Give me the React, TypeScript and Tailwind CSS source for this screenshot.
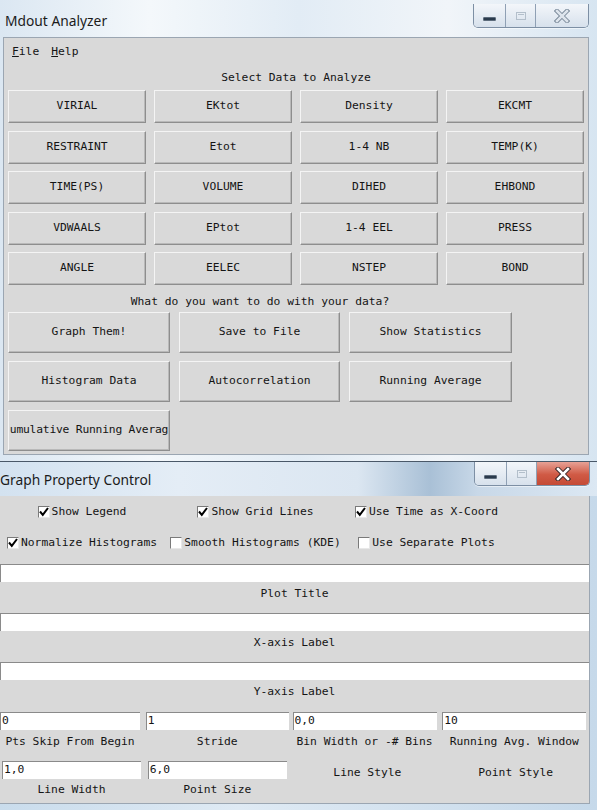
import React from "react";

const mono = "font-['DejaVu_Sans_Mono','Liberation_Mono',monospace] text-[11.3px] text-[#141414]";

function TkButton({ label, className = "", tight = false }: { label: string; className?: string; tight?: boolean }) {
  return (
    <div
      className={`flex items-center justify-center overflow-hidden whitespace-nowrap bg-[#d9d9d9] border border-t-[#f4f4f4] border-l-[#f4f4f4] border-r-[#8e8e8e] border-b-[#8e8e8e] shadow-[inset_-1px_-1px_0_#b9b9b9] ${className}`}
    >
      <span className={`${mono} ${tight ? "tracking-[-0.2px]" : ""}`}>{label}</span>
    </div>
  );
}

function Check({ checked }: { checked: boolean }) {
  return (
    <div className="w-[12px] h-[12px] bg-white border border-t-[#7a7a7a] border-l-[#7a7a7a] border-r-[#e8e8e8] border-b-[#e8e8e8] flex items-center justify-center">
      {checked && (
        <svg width="10" height="10" viewBox="0 0 10 10">
          <path d="M1 4.5 L3.8 7.8 L9 1" fill="none" stroke="#000" strokeWidth="2" />
        </svg>
      )}
    </div>
  );
}

function CheckItem({ checked, label }: { checked: boolean; label: string }) {
  return (
    <div className="flex items-center gap-[2px] justify-self-center">
      <Check checked={checked} />
      <span className={mono}>{label}</span>
    </div>
  );
}

function Entry({ value = "", className = "" }: { value?: string; className?: string }) {
  return (
    <div
      className={`h-[18px] bg-white border-t border-l border-t-[#8a8a8a] border-l-[#8a8a8a] flex items-center pl-[1px] ${className}`}
    >
      <span className={mono}>{value}</span>
    </div>
  );
}

function Controls({ active }: { active: boolean }) {
  return (
    <div className="flex h-[24px] border border-t-0 border-[#7d8fa4] rounded-b-[5px] overflow-hidden shadow-[0_1px_0_#ffffff80]">
      <div className="w-[32px] h-full bg-[linear-gradient(#f3f6fa,#d7e1ec)] border-r border-[#8fa0b4] flex items-end justify-center pb-[6px]">
        <div className="w-[13px] h-[4px] bg-[#2a3a4c] rounded-[1px] border border-[#5d6c7c]" />
      </div>
      <div className="w-[30px] h-full bg-[linear-gradient(#f3f6fa,#d7e1ec)] border-r border-[#8fa0b4] flex items-center justify-center">
        <div className="w-[10px] h-[8px] border border-[#b3bfcb] flex items-start justify-center">
          <div className="w-[6px] h-[1px] bg-[#b3bfcb] mt-[1px]" />
        </div>
      </div>
      <div
        className={`w-[52px] h-full flex items-center justify-center ${
          active ? "bg-[linear-gradient(#e7a195,#d05a45_55%,#c44a35)]" : "bg-[linear-gradient(#f3f6fa,#d7e1ec)]"
        }`}
      >
        <svg width="16" height="14" viewBox="0 0 16 14">
          <path
            d="M3 2 L13 12 M13 2 L3 12"
            stroke={active ? "#3a2a2a" : "#7d8c9c"}
            strokeWidth="4.5"
            strokeLinecap="square"
            fill="none"
          />
          <path
            d="M3 2 L13 12 M13 2 L3 12"
            stroke={active ? "#ffffff" : "#dde4ec"}
            strokeWidth="2.5"
            strokeLinecap="square"
            fill="none"
          />
        </svg>
      </div>
    </div>
  );
}

const grid1 = [
  ["VIRIAL", "EKtot", "Density", "EKCMT"],
  ["RESTRAINT", "Etot", "1-4 NB", "TEMP(K)"],
  ["TIME(PS)", "VOLUME", "DIHED", "EHBOND"],
  ["VDWAALS", "EPtot", "1-4 EEL", "PRESS"],
  ["ANGLE", "EELEC", "NSTEP", "BOND"],
];

export default function App() {
  return (
    <div className="w-[597px] h-[810px] overflow-hidden bg-[linear-gradient(90deg,#c9dcec,#dfeaf4_40%,#c6d9ea)] flex flex-col">
      {/* Window 1 */}
      <div className="h-[461px] flex flex-col bg-[linear-gradient(90deg,#dbe7f2,#f4f8fb_25%,#e2ecf5_50%,#f1f5f9_75%,#d7e5f1)]">
        <div className="h-[37px] flex items-start justify-between pr-[8px]">
          <span className="pl-[5px] pt-[11px] font-['Noto_Sans',sans-serif] text-[13.8px] leading-[19px] text-[#1b1b1b]">
            Mdout Analyzer
          </span>
          <div className="pt-[4px]">
            <Controls active={false} />
          </div>
        </div>
        <div className="flex">
          <div className="w-[3px]" />
          <div className="w-[586px] h-[418px] bg-[#d9d9d9] border border-[#9ba6b2] flex flex-col">
            <div className="h-[28px] flex items-center pl-[8px] gap-[12px]">
              <span className={mono}>
                <span className="underline">F</span>ile
              </span>
              <span className={mono}>
                <span className="underline">H</span>elp
              </span>
            </div>
            <div className="h-[24px] flex items-center justify-center w-[584px]">
              <span className={mono}>Select Data to Analyze</span>
            </div>
            <div className="pl-[4px] grid grid-cols-[138px_138px_138px_138px] gap-x-[8px] gap-y-[7.5px] auto-rows-[33px]">
              {grid1.flat().map((l) => (
                <TkButton key={l} label={l} />
              ))}
            </div>
            <div className="h-[27px] pl-[4px] flex items-center">
              <div className="w-[504px] text-center">
                <span className={mono}>What do you want to do with your data?</span>
              </div>
            </div>
            <div className="pl-[4px] grid grid-cols-[162px_161px_163px] gap-x-[9px] gap-y-[8px] auto-rows-[41px]">
              <TkButton label="Graph Them!" />
              <TkButton label="Save to File" />
              <TkButton label="Show Statistics" />
              <TkButton label="Histogram Data" />
              <TkButton label="Autocorrelation" />
              <TkButton label="Running Average" />
              <TkButton label="umulative Running Averag" tight />
            </div>
          </div>
        </div>
      </div>

      {/* Window 2 */}
      <div className="flex-1 flex flex-col border-t border-[#4a5868]">
        <div className="h-[34px] flex items-start justify-between pr-[7px] bg-[linear-gradient(90deg,#d3e2f0,#e4edf6_30%,#dbe6f1_60%,#a9c0d6_72%,#c8d8e8_80%,#dce8f3)]">
          <span className="pt-[8px] font-['Noto_Sans',sans-serif] text-[13.8px] leading-[19px] text-[#1b1b1b]">
            Graph Property Control
          </span>
          <div>
            <Controls active={true} />
          </div>
        </div>
        <div className="flex">
          <div className="w-[590px] h-[308px] bg-[#d9d9d9] border-r border-b border-[#9ba6b2] flex flex-col overflow-hidden">
            <div className="h-[32px] grid grid-cols-[164px_183px_159px] items-center">
              <CheckItem checked label="Show Legend" />
              <CheckItem checked label="Show Grid Lines" />
              <CheckItem checked label="Use Time as X-Coord" />
            </div>
            <div className="h-[30px] grid grid-cols-[164px_183px_159px] items-center">
              <CheckItem checked label="Normalize Histograms" />
              <CheckItem checked={false} label="Smooth Histograms (KDE)" />
              <CheckItem checked={false} label="Use Separate Plots" />
            </div>
            <div className="h-[6px]" />
            {["Plot Title", "X-axis Label", "Y-axis Label"].map((l, i) => (
              <div key={l} className="flex flex-col">
                <Entry className="w-full" />
                <div className={`${i === 2 ? "h-[32px]" : "h-[31px]"} flex justify-center pt-[3px]`}>
                  <span className={`${mono} leading-[17px]`}>{l}</span>
                </div>
              </div>
            ))}
            <div className="flex">
              {[
                ["0", "Pts Skip From Begin", "w-[146px]", "w-[140px]"],
                ["1", "Stride", "w-[147px]", "w-[143px]"],
                ["0,0", "Bin Width or -# Bins", "w-[150px]", "w-[144px]"],
                ["10", "Running Avg. Window", "w-[147px]", "w-[144px]"],
              ].map(([v, l, w, ew]) => (
                <div key={l} className={`${w} flex flex-col`}>
                  <Entry value={v} className={ew} />
                  <div className={`${ew} h-[24px] flex items-center justify-center`}>
                    <span className={`${mono} whitespace-nowrap`}>{l}</span>
                  </div>
                </div>
              ))}
            </div>
            <div className="h-[7px]" />
            <div className="flex">
              <div className="w-[146px] pl-[2px] flex flex-col">
                <Entry value="1,0" className="w-[139px]" />
                <div className="w-[139px] h-[22px] flex items-center justify-center">
                  <span className={mono}>Line Width</span>
                </div>
              </div>
              <div className="w-[147px] pl-[2px] flex flex-col">
                <Entry value="6,0" className="w-[139px]" />
                <div className="w-[139px] h-[22px] flex items-center justify-center">
                  <span className={mono}>Point Size</span>
                </div>
              </div>
              <div className="w-[150px] flex justify-center pt-[3px]">
                <span className={`${mono} leading-[17px]`}>Line Style</span>
              </div>
              <div className="w-[147px] flex justify-center pt-[3px]">
                <span className={`${mono} leading-[17px]`}>Point Style</span>
              </div>
            </div>
          </div>
          <div className="flex-1" />
        </div>
      </div>
    </div>
  );
}
